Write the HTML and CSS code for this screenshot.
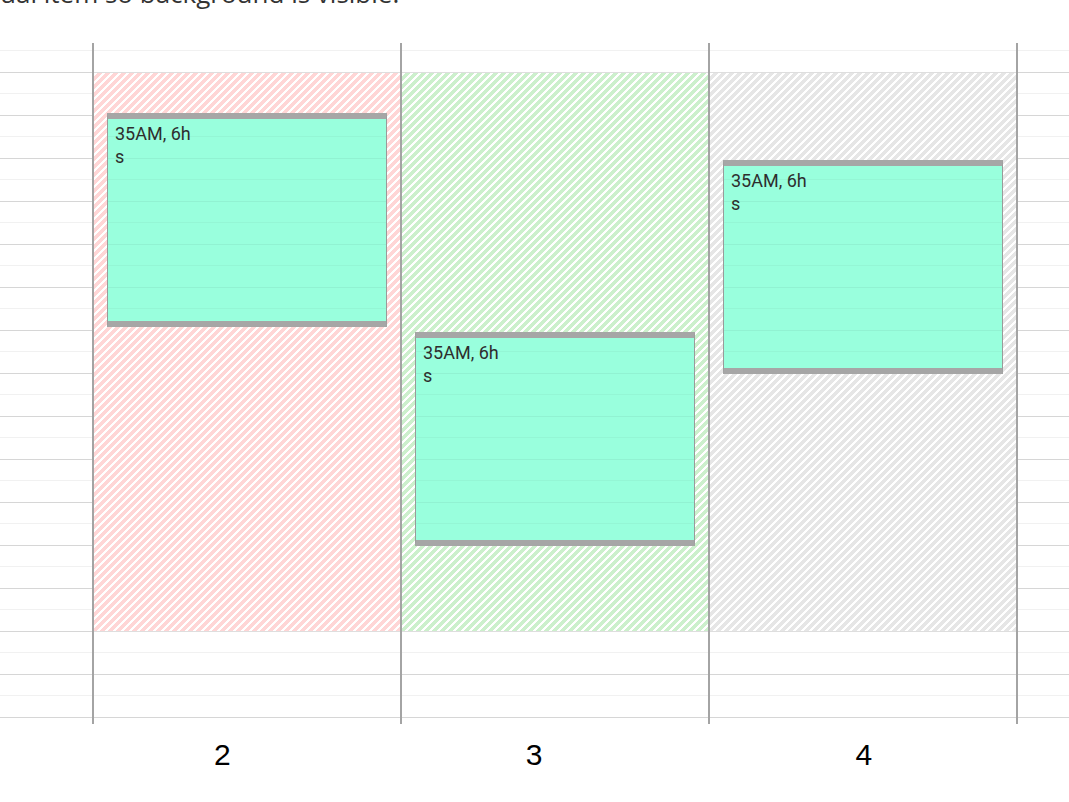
FILE: index.html
```html
<!DOCTYPE html>
<html lang="en">
<head>
    <meta charset="utf-8">
    <title>Group backgrounds</title>
    <link rel="stylesheet" href="styles.css">
</head>
<body>
    <p class="caption">ual item so background is visible.</p>

    <div class="chart">
        <div class="gutter"></div>

        <div class="group group-red">
            <div class="lane">
                <div class="item" style="margin-top: 40px">
                    <div class="item-text">35AM, 6h<br>s</div>
                </div>
            </div>
        </div>

        <div class="group group-green">
            <div class="lane">
                <div class="item" style="margin-top: 259px">
                    <div class="item-text">35AM, 6h<br>s</div>
                </div>
            </div>
        </div>

        <div class="group group-gray">
            <div class="lane">
                <div class="item" style="margin-top: 87px">
                    <div class="item-text">35AM, 6h<br>s</div>
                </div>
            </div>
        </div>

        <div class="gutter"></div>
    </div>

    <div class="axis">
        <span class="axis-label" style="margin-left: 214px">2</span>
        <span class="axis-label" style="margin-left: 295px">3</span>
        <span class="axis-label" style="margin-left: 313px">4</span>
    </div>
</body>
</html>
```

FILE: styles.css
```css
* {
    box-sizing: border-box;
}

:root {
    --axis-color: #a4a4a4;
    --major-line: #d6d6d6;
    --minor-line: #f1f1f1;
    --item-color: #99ffdd;
    --bar-color: #a6a6a6;
}

body {
    margin: 0;
    width: 1069px;
    height: 802px;
    overflow: hidden;
    background-color: #fff;
    font-family: "Open Sans", sans-serif;
}

.caption {
    margin: -25px 0 32px;
    font-size: 26px;
    line-height: 36px;
    color: #333;
    white-space: nowrap;
}

/* chart: horizontal grid lines behind everything */
.chart {
    display: grid;
    grid-template-columns: 92px 308px 308px 310px 1fr;
    height: 681px;
    background-image:
        linear-gradient(var(--major-line) 1px, transparent 1px),
        linear-gradient(var(--minor-line) 1px, transparent 1px);
    background-size: 100% 43px;
    background-position: 0 29px, 0 7px;
}

.group {
    border-left: 2px solid var(--axis-color);
    padding-top: 29px;
}

.group-gray {
    border-right: 2px solid var(--axis-color);
}

.lane {
    --stripe: #e6e6e6;
    height: 560px;
    border-top: 1px solid #dedede;
    border-bottom: 1px solid #dedede;
    background-color: #fff;
    background-image: linear-gradient(-45deg,
        var(--stripe) 28%, transparent 28%,
        transparent 50%, var(--stripe) 50%,
        var(--stripe) 78%, transparent 78%);
    background-size: 8px 8px;
}

.group-red .lane {
    --stripe: #ffd6d6;
}

.group-green .lane {
    --stripe: #ccf0cc;
}

.item {
    height: 214px;
    margin: 0 13px;
    border: 1px solid #9a9a9a;
    border-top: 6px solid var(--bar-color);
    border-bottom: 6px solid var(--bar-color);
    background-color: var(--item-color);
    /* grid lines keep showing through the item */
    background-image:
        linear-gradient(rgba(0, 0, 0, 0.05) 1px, transparent 1px),
        linear-gradient(rgba(0, 0, 0, 0.035) 1px, transparent 1px);
    background-size: 100% 43px;
    background-position: 0 72px, 0 50px;
    background-attachment: fixed;
}

.item-text {
    padding: 3px 7px;
    font-family: Roboto, sans-serif;
    font-size: 18px;
    line-height: 23px;
    color: #2e2e2e;
}

.axis {
    display: flex;
    margin-top: 14px;
    font-family: "Liberation Sans", Arial, sans-serif;
    font-size: 30px;
    line-height: 34px;
    color: #000;
}
```
